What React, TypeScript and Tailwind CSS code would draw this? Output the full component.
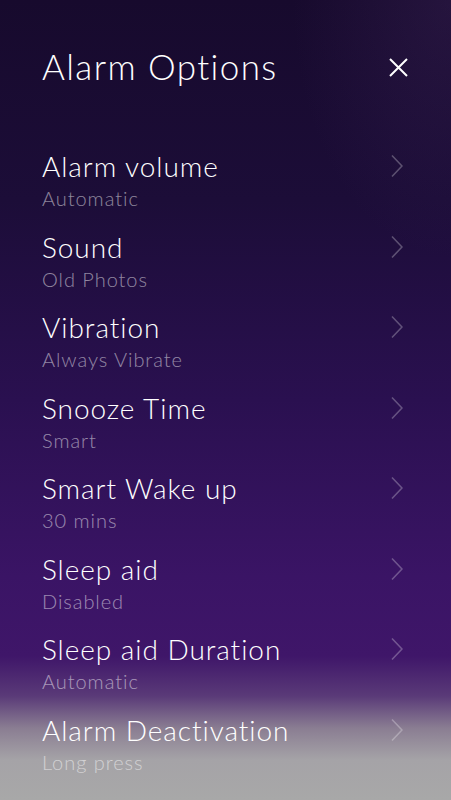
import React from "react";

const options = [
  { title: "Alarm volume", value: "Automatic" },
  { title: "Sound", value: "Old Photos" },
  { title: "Vibration", value: "Always Vibrate" },
  { title: "Snooze Time", value: "Smart" },
  { title: "Smart Wake up", value: "30 mins" },
  { title: "Sleep aid", value: "Disabled" },
  { title: "Sleep aid Duration", value: "Automatic" },
  { title: "Alarm Deactivation", value: "Long press" },
];

const Chevron: React.FC = () => (
  <svg width="12" height="24" viewBox="0 0 12 24" fill="none">
    <path d="M1 1.5 L11 12 L1 22.5" stroke="rgba(255,255,255,0.28)" strokeWidth="1.6" />
  </svg>
);

const App: React.FC = () => {
  return (
    <div
      className="relative w-[451px] h-[800px] overflow-hidden text-white bg-[linear-gradient(to_bottom,#170a2d_0%,#1c0d38_25%,#2a1050_50%,#3a1465_72%,#3f1669_82%,#5a3a78_87%,#8a7d92_91%,#a5a3a7_95%,#a8a8a8_100%)]"
      style={{ fontFamily: "Lato, 'Open Sans', sans-serif" }}
    >
      <div className="absolute right-0 top-0 w-[160px] h-[260px] bg-[radial-gradient(ellipse_at_top_right,rgba(80,50,110,0.25),transparent_70%)]" />
      <div className="relative flex flex-col">
        <div className="flex items-center justify-between h-[134px] pl-[42px] pr-[43px]">
          <h1 className="text-[35px] leading-[40px] font-light tracking-[1.4px] -mt-[3px]">Alarm Options</h1>
          <svg width="19" height="19" viewBox="0 0 19 19">
            <path d="M1 1 L18 18 M18 1 L1 18" stroke="white" strokeWidth="2" />
          </svg>
        </div>
        <div className="flex flex-col pt-[13px]">
          {options.map((o) => (
            <div key={o.title} className="flex justify-between h-[80.5px] pl-[42px] pr-[48px]">
              <div className="flex flex-col">
                <span className="text-[28px] leading-[38px] font-light tracking-[0.95px]">{o.title}</span>
                <span className="text-[20px] leading-[27px] font-light text-white/50 tracking-[0.95px]">{o.value}</span>
              </div>
              <div className="h-[38px] flex items-center">
                <Chevron />
              </div>
            </div>
          ))}
        </div>
      </div>
    </div>
  );
};

export default App;
